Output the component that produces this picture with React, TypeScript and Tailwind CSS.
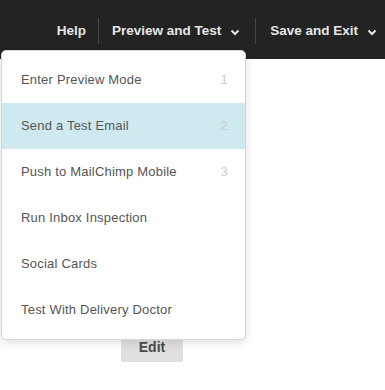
const items = [
  { label: 'Enter Preview Mode', key: '1' },
  { label: 'Send a Test Email', key: '2', active: true },
  { label: 'Push to MailChimp Mobile', key: '3' },
  { label: 'Run Inbox Inspection' },
  { label: 'Social Cards' },
  { label: 'Test With Delivery Doctor' },
]

function Chevron() {
  return (
    <svg width="10" height="7" viewBox="0 0 10 7" className="ml-[9px] mt-[2px]" aria-hidden="true">
      <path d="M1.5 1.5 5 5l3.5-3.5" fill="none" stroke="currentColor" strokeWidth="2" />
    </svg>
  )
}

export default function App() {
  return (
    <div className="relative h-[390px] w-[385px] overflow-hidden bg-white font-['Liberation_Sans',Arial,sans-serif]">
      <header className="flex h-[59px] items-center justify-end bg-[#232323] pt-[3px] pr-[8px] text-[13.5px] font-bold text-[#e6e6e6]">
        <span className="pr-[12px]">Help</span>
        <span className="h-[26px] w-px bg-[#474747]" />
        <span className="flex items-center pl-[13px] pr-[15px]">
          Preview and Test
          <Chevron />
        </span>
        <span className="h-[26px] w-px bg-[#474747]" />
        <span className="flex items-center pl-[14px]">
          Save and Exit
          <Chevron />
        </span>
      </header>

      <div className="flex pt-[274px] pl-[121px]">
        <button className="h-[29px] w-[62px] rounded-[2px] bg-[#e0e0e0] text-[14px] font-bold text-[#4a4a4a]">
          Edit
        </button>
      </div>

      <ul className="absolute left-[1px] top-[50px] w-[245px] rounded-[5px] border border-[#d6d6d6] bg-white py-[6px] shadow-[0_3px_10px_rgba(0,0,0,0.12)]">
        {items.map((item) => (
          <li
            key={item.label}
            className={`flex h-[46px] items-center justify-between pl-[19px] pr-[17px] text-[13px] tracking-[0.2px] text-[#555] ${
              item.active ? 'bg-[#cfe9f1]' : ''
            }`}
          >
            <span>{item.label}</span>
            {item.key && <span className="text-[#cccccc]">{item.key}</span>}
          </li>
        ))}
      </ul>
    </div>
  )
}
